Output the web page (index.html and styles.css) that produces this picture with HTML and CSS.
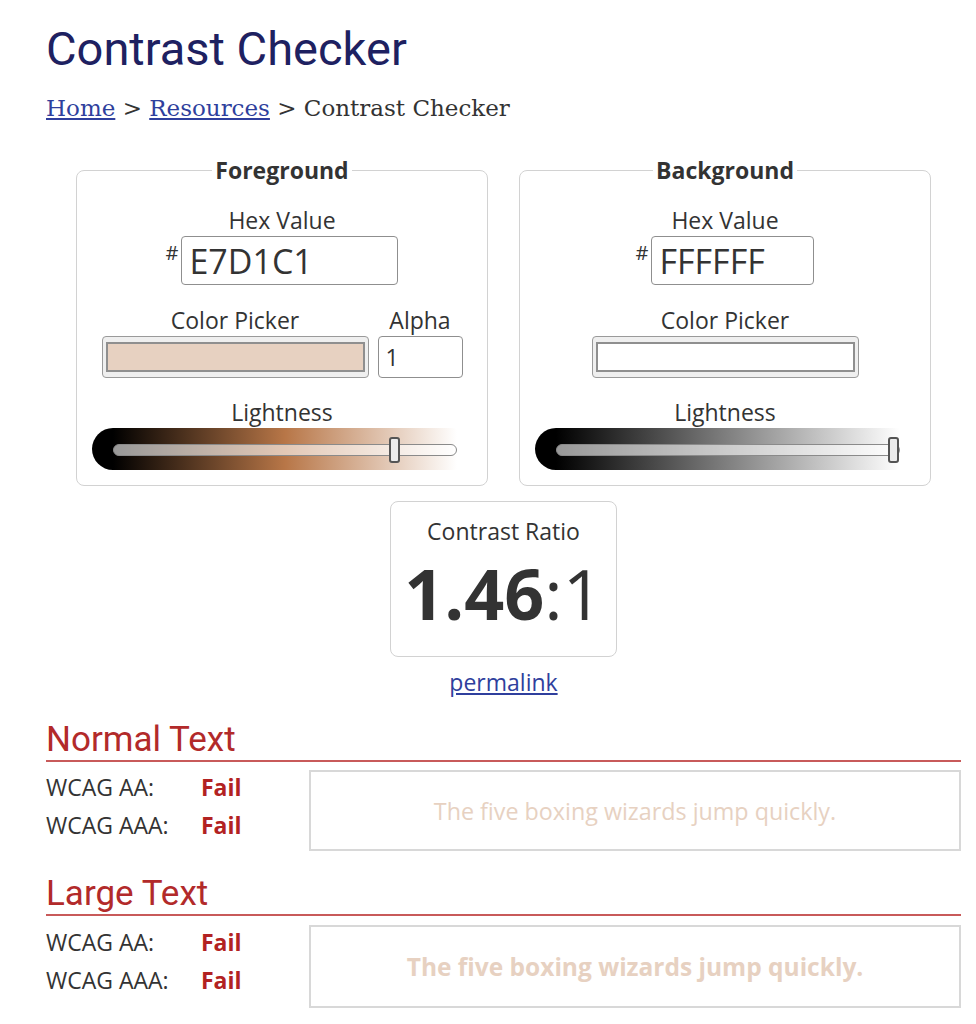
FILE: index.html
```html
<!DOCTYPE html>
<html lang="en">
<head>
<meta charset="utf-8">
<title>Contrast Checker</title>
<link rel="stylesheet" href="styles.css">
</head>
<body>
<main class="page">
  <h1 class="title">Contrast Checker</h1>
  <p class="crumbs"><a href="#">Home</a> &gt; <a href="#">Resources</a> &gt; Contrast Checker</p>

  <div class="pickers">
    <fieldset class="panel">
      <legend class="panel-legend">Foreground</legend>
      <div class="label">Hex Value</div>
      <div class="hexrow">
        <span class="hash">#</span>
        <input class="hex hex-wide" type="text" value="E7D1C1">
      </div>
      <div class="pickrow">
        <div class="col">
          <div class="label">Color Picker</div>
          <div class="swatch"><div class="swatch-fill fill-fg"></div></div>
        </div>
        <div class="col">
          <div class="label">Alpha</div>
          <input class="alpha" type="text" value="1">
        </div>
      </div>
      <div class="label label-gap">Lightness</div>
      <div class="slider slider-fg">
        <div class="track">
          <div class="lane"><div class="thumb" style="left:83.1%"></div></div>
        </div>
      </div>
    </fieldset>

    <fieldset class="panel">
      <legend class="panel-legend">Background</legend>
      <div class="label">Hex Value</div>
      <div class="hexrow">
        <span class="hash">#</span>
        <input class="hex hex-narrow" type="text" value="FFFFFF">
      </div>
      <div class="pickrow">
        <div class="col">
          <div class="label">Color Picker</div>
          <div class="swatch"><div class="swatch-fill fill-bg"></div></div>
        </div>
      </div>
      <div class="label label-gap">Lightness</div>
      <div class="slider slider-bg">
        <div class="track">
          <div class="lane"><div class="thumb" style="left:100%"></div></div>
        </div>
      </div>
    </fieldset>
  </div>

  <div class="ratio">
    <div class="ratio-label">Contrast Ratio</div>
    <div class="ratio-value"><b>1.46</b>:1</div>
  </div>
  <a class="permalink" href="#">permalink</a>

  <section class="results">
    <h2 class="section-title">Normal Text</h2>
    <hr class="rule">
    <div class="result">
      <div class="levels">
        <div class="level"><span class="level-name">WCAG AA:</span><span class="fail">Fail</span></div>
        <div class="level"><span class="level-name">WCAG AAA:</span><span class="fail">Fail</span></div>
      </div>
      <div class="sample">The five boxing wizards jump quickly.</div>
    </div>
  </section>

  <section class="results">
    <h2 class="section-title">Large Text</h2>
    <hr class="rule">
    <div class="result result-large">
      <div class="levels levels-large">
        <div class="level"><span class="level-name">WCAG AA:</span><span class="fail">Fail</span></div>
        <div class="level"><span class="level-name">WCAG AAA:</span><span class="fail">Fail</span></div>
      </div>
      <div class="sample sample-large">The five boxing wizards jump quickly.</div>
    </div>
  </section>
</main>
</body>
</html>
```

FILE: styles.css
```css
html, body {
  background: #fff;
}

body {
  margin: 0;
  font-family: "Open Sans", "Liberation Sans", sans-serif;
  color: #333;
}

.page {
  margin-left: 46px;
  width: 915px;
  padding-bottom: 20px;
}

.title {
  margin: 21px 0 0;
  font-family: Roboto, "Liberation Sans", sans-serif;
  font-weight: 400;
  font-size: 47px;
  line-height: 56px;
  color: #1e2161;
}

.crumbs {
  margin: 16px 0 0;
  font-family: "DejaVu Serif", "Liberation Serif", serif;
  font-size: 23px;
  line-height: 31px;
  color: #333;
}

.crumbs a {
  color: #2f3f9d;
}

.pickers {
  display: flex;
  justify-content: center;
  gap: 31px;
  margin-top: 30px;
}

.panel {
  width: 412px;
  min-width: 0;
  box-sizing: border-box;
  margin: 0;
  padding: 18px 0 15px;
  border: 1px solid #d2d2d2;
  border-radius: 8px;
  display: flex;
  flex-direction: column;
  align-items: center;
}

.panel-legend {
  margin: 0 auto;
  padding: 0 3px;
  font-weight: 700;
  font-size: 23px;
  line-height: 32px;
  color: #333;
}

.label {
  font-size: 23px;
  line-height: 32px;
  color: #333;
}

.label-gap {
  margin-top: 18px;
}

.hexrow {
  display: flex;
  align-items: flex-start;
  gap: 3px;
}

.hash {
  font-size: 20px;
  line-height: 26px;
  margin-top: 4px;
}

.hex {
  height: 49px;
  box-sizing: border-box;
  margin: 0;
  border: 1px solid #8f8f8f;
  border-radius: 4px;
  padding: 0 0 0 7px;
  font-family: "Open Sans", "Liberation Sans", sans-serif;
  font-size: 34px;
  color: #333;
  background: #fff;
  outline: none;
}

.hex-wide {
  width: 217px;
}

.hex-narrow {
  width: 163px;
}

.pickrow {
  display: flex;
  gap: 9px;
  margin-top: 19px;
}

.col {
  display: flex;
  flex-direction: column;
  align-items: center;
}

.swatch {
  width: 267px;
  height: 42px;
  box-sizing: border-box;
  border: 1px solid #9a9a9a;
  border-radius: 4px;
  background: #efefef;
  padding: 5px 3px;
}

.swatch-fill {
  height: 100%;
  box-sizing: border-box;
  border: 2px solid #8f8f8f;
}

.fill-fg {
  background: #e7d1c1;
}

.fill-bg {
  background: #ffffff;
}

.alpha {
  width: 85px;
  height: 42px;
  box-sizing: border-box;
  margin: 0;
  border: 1px solid #8f8f8f;
  border-radius: 4px;
  padding: 0 7px;
  font-family: "Open Sans", "Liberation Sans", sans-serif;
  font-size: 23px;
  color: #333;
  background: #fff;
  outline: none;
}

.slider {
  width: 380px;
  height: 42px;
  box-sizing: border-box;
  border-radius: 21px;
  padding: 16px 15px 14px 21px;
}

.slider-fg {
  background: linear-gradient(to right, #000 5.5%, hsl(25, 44%, 50%) 50.8%, #fff 96%);
}

.slider-bg {
  background: linear-gradient(to right, #000 5.5%, #808080 50.8%, #fff 96%);
}

.track {
  position: relative;
  height: 12px;
  box-sizing: border-box;
  border: 1px solid #8a8a8a;
  border-radius: 6px;
  background: rgba(255, 255, 255, 0.6);
}

.lane {
  position: absolute;
  left: 0;
  right: 11px;
  top: -8px;
  height: 26px;
}

.thumb {
  position: absolute;
  top: 0;
  width: 11px;
  height: 26px;
  box-sizing: border-box;
  border: 2px solid #555;
  border-radius: 3px;
  background: #ececec;
}

.ratio {
  width: 227px;
  box-sizing: border-box;
  margin: 15px auto 0;
  border: 1px solid #d2d2d2;
  border-radius: 8px;
  padding: 13px 0 16px;
  text-align: center;
}

.ratio-label {
  font-size: 23px;
  line-height: 32px;
}

.ratio-value {
  font-size: 70px;
  line-height: 93px;
  font-weight: 400;
}

.ratio-value b {
  font-weight: 700;
}

.permalink {
  display: block;
  width: max-content;
  margin: 9px auto 0;
  font-size: 23px;
  line-height: 32px;
  color: #2f3f9d;
}

.results {
  margin-top: 22px;
}

.results + .results {
  margin-top: 23px;
}

.section-title {
  margin: 0;
  font-family: Roboto, "Liberation Sans", sans-serif;
  font-weight: 400;
  font-size: 35px;
  line-height: 40px;
  color: #b22a2a;
}

.rule {
  margin: 0;
  border: 0;
  height: 2px;
  background: #c85a5a;
}

.result {
  display: flex;
  margin-top: 8px;
}

.result-large {
  margin-top: 9px;
}

.levels {
  width: 263px;
  flex: none;
  margin-top: -2px;
}

.level {
  display: flex;
  font-size: 23px;
  line-height: 38px;
  color: #333;
}

.level-name {
  width: 155px;
}

.fail {
  font-weight: 700;
  color: #b22222;
}

.sample {
  flex: 1;
  height: 81px;
  box-sizing: border-box;
  border: 2px solid #d8d8d8;
  display: flex;
  align-items: center;
  justify-content: center;
  font-size: 23.3px;
  color: #e7d1c1;
}

.sample-large {
  height: 83px;
  font-size: 24.5px;
  font-weight: 700;
}
```
